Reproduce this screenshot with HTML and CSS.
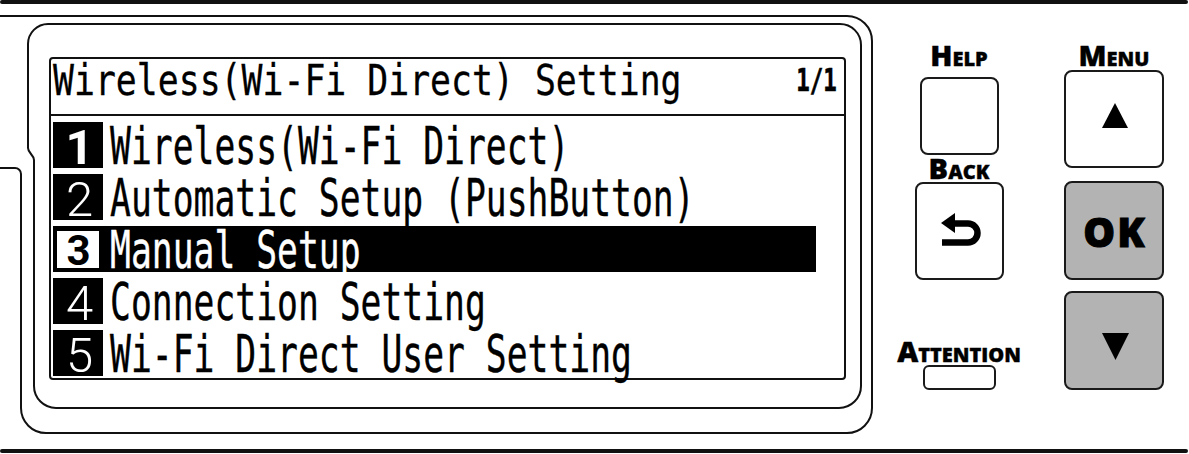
FILE: index.html
```html
<!DOCTYPE html>
<html lang="en">
<head>
<meta charset="utf-8">
<title>Wireless (Wi-Fi Direct) Setting</title>
<link rel="stylesheet" href="styles.css">
</head>
<body>
<div class="device">
  <svg class="frame" viewBox="0 0 1189 454" aria-hidden="true">
    <path d="M0 16 H847 A25 25 0 0 1 872 41 V408 A25 25 0 0 1 847 433 H46 A25 25 0 0 1 21 408 V174 A6 6 0 0 0 15 168 H0"/>
    <path d="M48 24 H840 A21 21 0 0 1 861 45 V386 A22 22 0 0 1 839 408 H56 A22 22 0 0 1 34 386 V160 C34 155 28 153 28 148 V44 A20 20 0 0 1 48 24 Z"/>
  </svg>
  <div class="rule"></div>
  <div class="main">
    <section class="screen">
      <header class="screen-head">
        <div class="title"><span class="title-text">Wireless(Wi-Fi Direct) Setting</span></div>
        <span class="page">1/1</span>
      </header>
      <ol class="menu">
        <li class="item"><span class="num num-strong">1</span><span class="label">Wireless(Wi-Fi Direct)</span></li>
        <li class="item"><span class="num">2</span><span class="label">Automatic Setup (PushButton)</span></li>
        <li class="item selected"><span class="num">3</span><span class="label">Manual Setup</span></li>
        <li class="item"><span class="num">4</span><span class="label">Connection Setting</span></li>
        <li class="item"><span class="num">5</span><span class="label">Wi-Fi Direct User Setting</span></li>
      </ol>
    </section>
    <div class="controls">
      <div class="col col-left">
        <span class="key-label">Help</span>
        <button class="key key-help" aria-label="Help"></button>
        <span class="key-label label-back">Back</span>
        <button class="key key-back" aria-label="Back">
          <svg class="icon-back" viewBox="0 0 40 34" width="40" height="34">
            <polygon points="0,10 14,0 14,20"/>
            <path d="M11 10.5 H27 A9.5 9.5 0 0 1 27 29.5 H1" fill="none" stroke="#000" stroke-width="6.5"/>
          </svg>
        </button>
        <span class="key-label label-attn">Attention</span>
        <span class="led"></span>
      </div>
      <div class="col col-right">
        <span class="key-label">Menu</span>
        <button class="key key-up" aria-label="Up">
          <svg viewBox="0 0 26 25" width="26" height="25"><polygon points="13,0 26,25 0,25"/></svg>
        </button>
        <button class="key key-ok">OK</button>
        <button class="key key-down" aria-label="Down">
          <svg viewBox="0 0 27 27" width="27" height="27"><polygon points="0,0 27,0 13.5,27"/></svg>
        </button>
      </div>
    </div>
  </div>
  <div class="rule"></div>
</div>
</body>
</html>
```

FILE: styles.css
```css
* { box-sizing: border-box; margin: 0; padding: 0; }
html, body { background: #fff; }
body {
  width: 1189px;
  height: 454px;
  overflow: hidden;
  font-family: "DejaVu Sans Mono", monospace;
  color: #000;
}
.device { position: relative; width: 1189px; height: 454px; }
.frame { position: absolute; left: 0; top: 0; width: 1189px; height: 454px; }
.frame path { fill: none; stroke: #111; stroke-width: 2; }
.rule { height: 4px; width: 1188px; background: #111; border-radius: 2px; }
.main { position: relative; display: flex; height: 445px; }

/* LCD screen */
.screen {
  margin: 53px 0 0 49px;
  width: 797px;
  height: 323px;
  border: 2px solid #111;
  border-radius: 4px;
  display: flex;
  flex-direction: column;
}
.screen-head {
  height: 57px;
  border-bottom: 2px solid #111;
  display: flex;
  padding: 1px 7px 0 2px;
}
.title { flex: 1 1 0; min-width: 0; }
.title-text {
  display: block;
  font-size: 43.5px;
  line-height: 40px;
  white-space: pre;
  transform: scaleX(0.8);
  transform-origin: 0 50%;
  -webkit-text-stroke: 0.3px #000;
}
.page {
  font-weight: bold;
  font-size: 32px;
  line-height: 40px;
  transform: scaleX(0.7);
  transform-origin: 100% 50%;
  -webkit-text-stroke: 0.6px #000;
}
.menu {
  list-style: none;
  padding: 6px 0 0 2px;
  display: flex;
  flex-direction: column;
  gap: 6px;
}
.item { display: flex; height: 46px; width: 763px; }
.num {
  flex: none;
  width: 50px;
  height: 46px;
  background: #000;
  color: #fff;
  font-family: Roboto, "DejaVu Sans", sans-serif;
  font-weight: 300;
  font-size: 49px;
  line-height: 46px;
  padding: 3px 0 0 3px;
  text-align: center;
}
.num-strong { font-weight: 700; }
.label {
  flex: 1 1 0;
  min-width: 0;
  margin-left: 7px;
  padding-top: 4px;
  font-size: 51px;
  line-height: 42px;
  white-space: pre;
  transform: scaleX(0.68);
  transform-origin: 0 50%;
  -webkit-text-stroke: 0.4px currentColor;
}
.selected { background: #000; color: #fff; }
.selected .num {
  width: 42px;
  height: 37px;
  margin: 5px 4px 0 4px;
  background: #fff;
  color: #000;
  font-weight: 700;
  font-size: 42px;
  line-height: 39px;
  padding: 0 0 0 1px;
}

/* Control keys */
.controls { display: flex; gap: 42px; margin-left: 50px; }
.col { display: flex; flex-direction: column; align-items: center; padding-top: 41px; }
.col-left { width: 126px; }
.col-right { width: 100px; }
.key-label {
  display: block;
  height: 20px;
  font-family: "Open Sans", "DejaVu Sans", sans-serif;
  font-weight: 800;
  font-variant: small-caps;
  font-size: 29px;
  line-height: 20px;
  white-space: nowrap;
  -webkit-text-stroke: 0.4px #000;
}
.key {
  display: flex;
  align-items: center;
  justify-content: center;
  border: 2px solid #1a1a1a;
  border-radius: 8px;
  background: #fff;
  font: inherit;
  color: #000;
}
.key-help { margin-top: 12px; width: 79px; height: 78px; }
.label-back { margin-top: 3px; }
.key-back { margin-top: 4px; width: 89px; height: 98px; padding: 0 0 3px 4px; }
.label-attn { margin-top: 61px; }
.led {
  display: block;
  margin-top: 4px;
  width: 73px;
  height: 25px;
  border: 2px solid #1a1a1a;
  border-radius: 6px;
}
.key-up { margin-top: 5px; width: 100px; height: 98px; padding: 0 0 7px 2px; }
.key-ok {
  margin-top: 13px;
  width: 100px;
  height: 99px;
  background: #b3b3b3;
  font-family: "Open Sans", "DejaVu Sans", sans-serif;
  font-weight: 800;
  font-size: 40px;
  letter-spacing: 2px;
  padding: 2px 0 0 2px;
  -webkit-text-stroke: 1px #000;
}
.key-down {
  margin-top: 11px;
  width: 100px;
  height: 99px;
  background: #b3b3b3;
  padding: 12px 0 0 2px;
}
```
